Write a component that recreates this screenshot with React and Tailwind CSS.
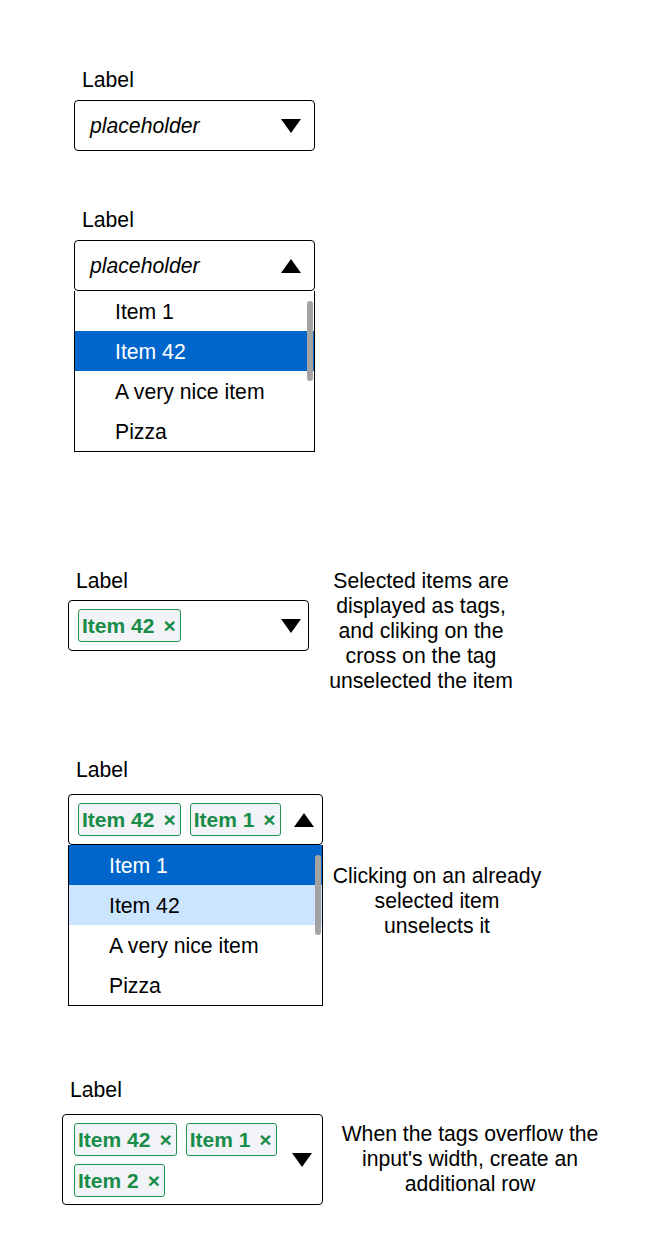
import React from 'react';

const Caret = ({ up = false }) => (
  <svg width="20" height="14" viewBox="0 0 20 14" className="shrink-0">
    {up ? <polygon points="10,0 20,14 0,14" fill="#000" /> : <polygon points="0,0 20,0 10,14" fill="#000" />}
  </svg>
);

const Tag = ({ children }) => (
  <span className="inline-flex items-center h-[33px] box-border border border-[#22944f] bg-[#f1f3f6] rounded-[3px] pl-[3px] pr-[4px] font-bold text-[21px] text-[#198c4a]">
    <span>{children}</span>
    <span className="ml-[9px]">×</span>
  </span>
);

const Label = () => <div className="h-[25px] ml-[8px]">Label</div>;

function OptionList({ items, width }) {
  return (
    <div className={`relative box-border border-x border-b border-black ${width}`}>
      {items.map((it) => (
        <div
          key={it.text}
          className={`h-[40px] flex items-center pl-[40px] ${
            it.state === 'active' ? 'bg-[#0066cc] text-white' : it.state === 'selected' ? 'bg-[#cce5ff]' : ''
          }`}
        >
          {it.text}
        </div>
      ))}
      <div className="absolute right-[1px] top-[10px] w-[6px] h-[80px] rounded-full bg-[#a3a3a3]" />
    </div>
  );
}

export default function App() {
  return (
    <div className="w-[668px] h-[1254px] bg-white text-black font-['Liberation_Sans',Arial,sans-serif] text-[21.2px] leading-[25px] pt-[67px]">
      {/* closed, empty */}
      <div className="pl-[74px]">
        <Label />
        <div className="mt-[8px] w-[241px] h-[51px] box-border border border-black rounded-[4px] flex items-center justify-between pl-[15px] pr-[13px]">
          <span className="italic">placeholder</span>
          <Caret />
        </div>
      </div>

      {/* open, empty */}
      <div className="pl-[74px] mt-[56px]">
        <Label />
        <div className="mt-[8px] w-[241px] h-[51px] box-border border border-black rounded-[4px] flex items-center justify-between pl-[15px] pr-[13px]">
          <span className="italic">placeholder</span>
          <Caret up />
        </div>
        <OptionList
          width="w-[241px]"
          items={[
            { text: 'Item 1' },
            { text: 'Item 42', state: 'active' },
            { text: 'A very nice item' },
            { text: 'Pizza' },
          ]}
        />
      </div>

      {/* one tag */}
      <div className="pl-[68px] mt-[116px] flex items-start">
        <div>
          <Label />
          <div className="mt-[7px] w-[241px] h-[51px] box-border border border-black rounded-[4px] flex items-center justify-between pl-[9px] pr-[7px]">
            <Tag>Item 42</Tag>
            <Caret />
          </div>
        </div>
        <div className="ml-[11px] w-[202px] text-center">
          Selected items are
          <br />
          displayed as tags,
          <br />
          and cliking on the
          <br />
          cross on the tag
          <br />
          unselected the item
        </div>
      </div>

      {/* tags, open */}
      <div className="pl-[68px] mt-[64px] flex items-start">
        <div>
          <Label />
          <div className="mt-[12px] w-[255px] h-[51px] box-border border border-black rounded-[4px] flex items-center justify-between pl-[9px] pr-[8px]">
            <div className="flex gap-[9px]">
              <Tag>Item 42</Tag>
              <Tag>Item 1</Tag>
            </div>
            <Caret up />
          </div>
          <OptionList
            width="w-[255px]"
            items={[
              { text: 'Item 1', state: 'active' },
              { text: 'Item 42', state: 'selected' },
              { text: 'A very nice item' },
              { text: 'Pizza' },
            ]}
          />
        </div>
        <div className="ml-[4px] mt-[106px] w-[220px] text-center">
          Clicking on an already
          <br />
          selected item
          <br />
          unselects it
        </div>
      </div>

      {/* overflowing tags */}
      <div className="pl-[62px] mt-[71px] flex items-start">
        <div>
          <Label />
          <div className="mt-[12px] w-[261px] h-[91px] box-border border border-black rounded-[4px] flex items-center justify-between pl-[11px] pr-[10px]">
            <div className="w-[205px] flex flex-wrap gap-x-[9px] gap-y-[8px]">
              <Tag>Item 42</Tag>
              <Tag>Item 1</Tag>
              <Tag>Item 2</Tag>
            </div>
            <Caret />
          </div>
        </div>
        <div className="ml-[12px] mt-[44px] w-[270px] text-center">
          When the tags overflow the
          <br />
          input's width, create an
          <br />
          additional row
        </div>
      </div>
    </div>
  );
}
